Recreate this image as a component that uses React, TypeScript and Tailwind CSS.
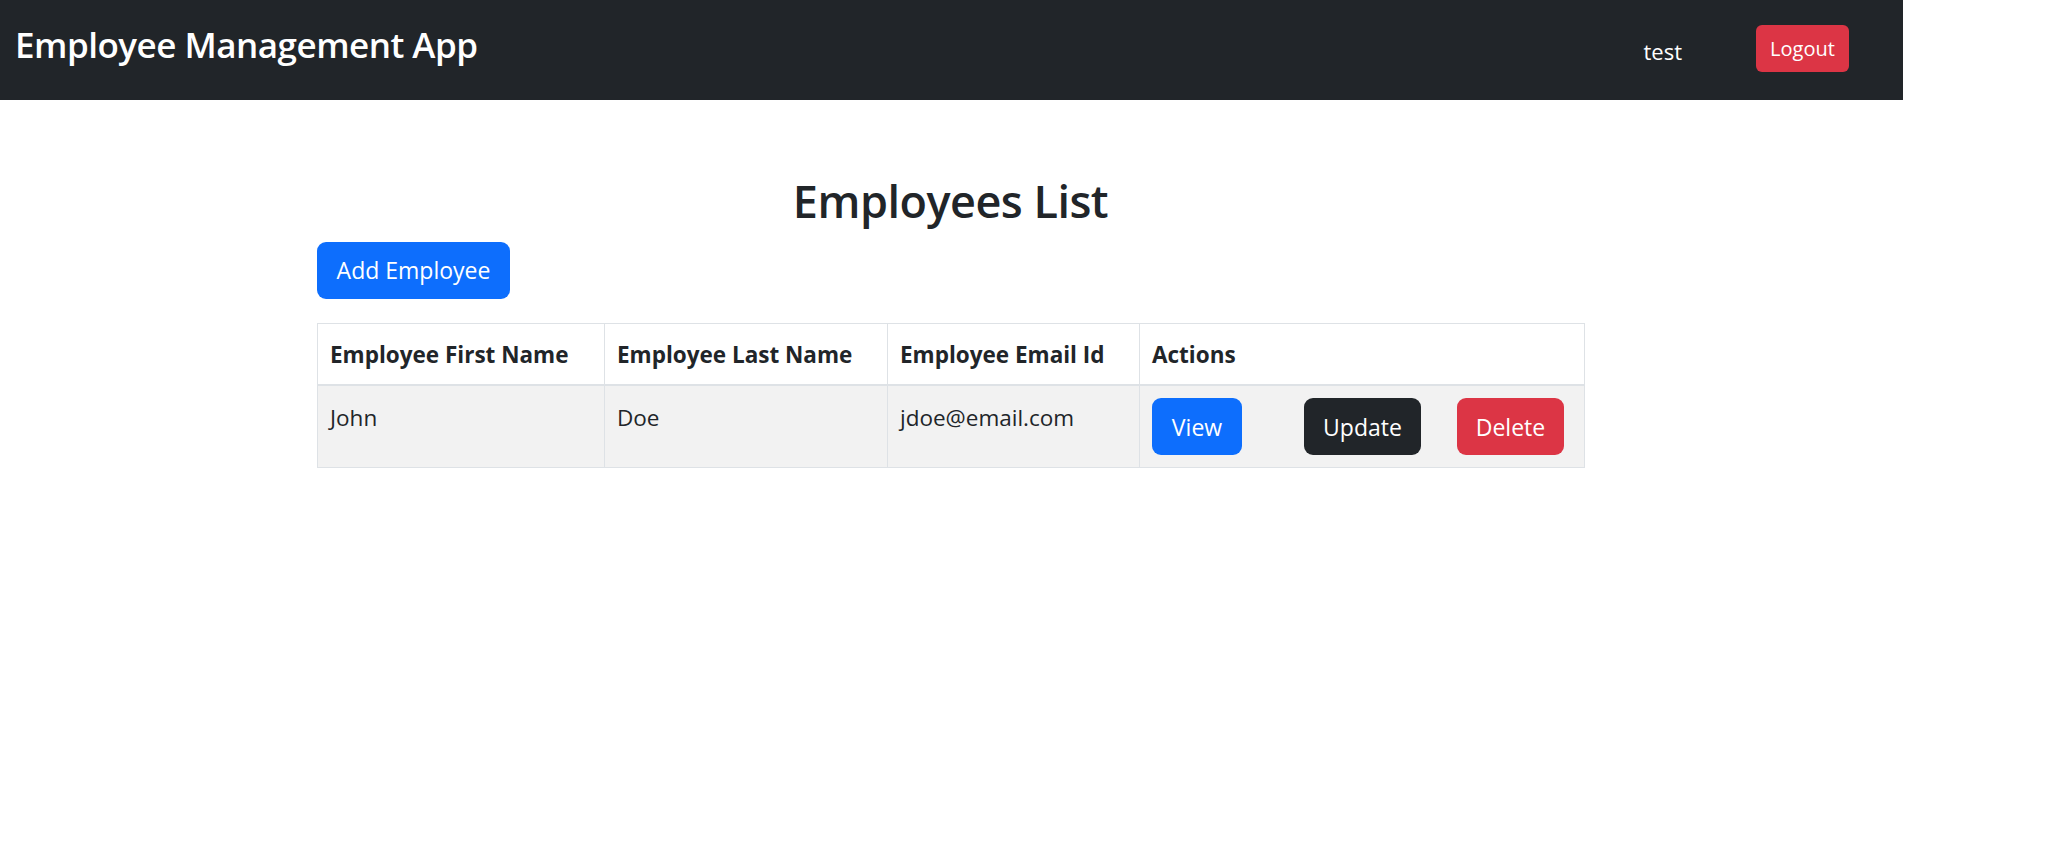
import React from "react";

interface Employee {
  id: number;
  firstName: string;
  lastName: string;
  emailId: string;
}

const employees: Employee[] = [
  { id: 1, firstName: "John", lastName: "Doe", emailId: "jdoe@email.com" },
];

const font = "font-['Open_Sans','Noto_Sans',sans-serif]";

const Navbar: React.FC = () => {
  return (
    <nav className="w-[1903px] h-[100px] bg-[#212529] flex items-center">
      <a className="pl-[15px] pb-[9px] text-[35px] font-semibold text-white tracking-[-0.5px]">
        Employee Management App
      </a>
      <div className="ml-auto flex items-center pr-[54px]">
        <span className="text-[22px] text-white pt-[2px]">test</span>
        <button className="ml-[74px] h-[47px] w-[93px] rounded-[6px] bg-[#dc3545] text-white text-[20px] mb-[4px] pt-[2px]">
          Logout
        </button>
      </div>
    </nav>
  );
};

const App: React.FC = () => {
  return (
    <div className={`min-h-screen bg-white text-[#212529] ${font}`}>
      <Navbar />
      <div className="ml-[317px] w-[1267px] pt-[72px]">
        <h2 className="text-center text-[45px] font-semibold leading-[58px] tracking-[-0.5px] mb-[12px]">
          Employees List
        </h2>
        <button className="h-[57px] w-[193px] rounded-[9px] bg-[#0d6efd] text-white text-[23px]">
          Add Employee
        </button>
        <table className="mt-[24px] w-[1267px] table-fixed border-collapse border border-[#dee2e6] text-[22.5px]">
          <colgroup>
            <col className="w-[287px]" />
            <col className="w-[283px]" />
            <col className="w-[252px]" />
            <col className="w-[445px]" />
          </colgroup>
          <thead>
            <tr className="border-b-2 border-[#dee2e6]">
              {["Employee First Name", "Employee Last Name", "Employee Email Id", "Actions"].map((h) => (
                <th
                  key={h}
                  className="border-x border-[#dee2e6] px-[12px] pt-[13px] pb-[11px] leading-[36px] text-left font-bold align-top"
                >
                  {h}
                </th>
              ))}
            </tr>
          </thead>
          <tbody>
            {employees.map((e) => (
              <tr key={e.id} className="bg-[#f2f2f2]">
                <td className="border border-[#dee2e6] px-[12px] pt-[14px] pb-[10px] leading-[36px] align-top">{e.firstName}</td>
                <td className="border border-[#dee2e6] px-[12px] pt-[14px] pb-[10px] leading-[36px] align-top">{e.lastName}</td>
                <td className="border border-[#dee2e6] px-[12px] pt-[14px] pb-[10px] leading-[36px] align-top">{e.emailId}</td>
                <td className="border border-[#dee2e6] px-[12px] py-[12px] align-top">
                  <div className="flex text-[23px]">
                    <button className="h-[57px] w-[90px] rounded-[9px] bg-[#0d6efd] text-white pt-[2px]">View</button>
                    <button className="ml-[62px] h-[57px] w-[117px] rounded-[9px] bg-[#212529] text-white pt-[2px]">
                      Update
                    </button>
                    <button className="ml-[36px] h-[57px] w-[107px] rounded-[9px] bg-[#dc3545] text-white pt-[2px]">
                      Delete
                    </button>
                  </div>
                </td>
              </tr>
            ))}
          </tbody>
        </table>
      </div>
    </div>
  );
};

export default App;
